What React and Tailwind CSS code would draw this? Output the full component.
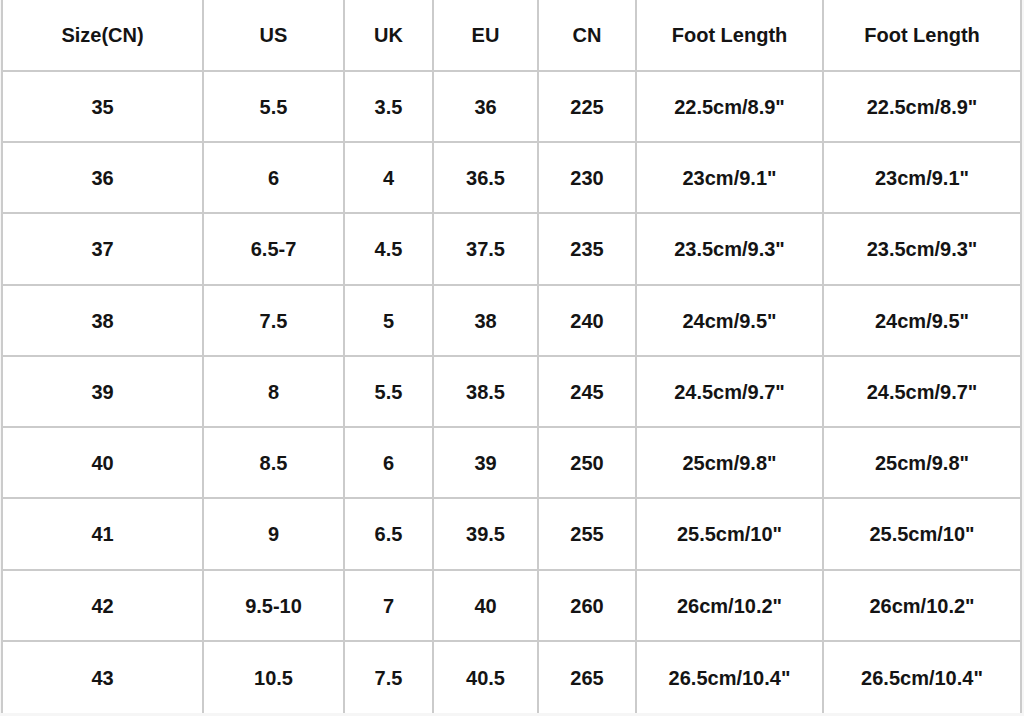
import React from "react";

// 列幅（罫線込み）と行の高さ
const colWidths = ["w-[203px]", "w-[141px]", "w-[89px]", "w-[105px]", "w-[98px]", "w-[187px]", "w-[198px]"];
const rowHeights = ["h-[72px]", "h-[71px]", "h-[71px]", "h-[72px]", "h-[71px]", "h-[71px]", "h-[71px]", "h-[72px]", "h-[71px]", "h-[71px]"];

const header = ["Size(CN)", "US", "UK", "EU", "CN", "Foot Length", "Foot Length"];

const rows = [
  ["35", "5.5", "3.5", "36", "225", "22.5cm/8.9\"", "22.5cm/8.9\""],
  ["36", "6", "4", "36.5", "230", "23cm/9.1\"", "23cm/9.1\""],
  ["37", "6.5-7", "4.5", "37.5", "235", "23.5cm/9.3\"", "23.5cm/9.3\""],
  ["38", "7.5", "5", "38", "240", "24cm/9.5\"", "24cm/9.5\""],
  ["39", "8", "5.5", "38.5", "245", "24.5cm/9.7\"", "24.5cm/9.7\""],
  ["40", "8.5", "6", "39", "250", "25cm/9.8\"", "25cm/9.8\""],
  ["41", "9", "6.5", "39.5", "255", "25.5cm/10\"", "25.5cm/10\""],
  ["42", "9.5-10", "7", "40", "260", "26cm/10.2\"", "26cm/10.2\""],
  ["43", "10.5", "7.5", "40.5", "265", "26.5cm/10.4\"", "26.5cm/10.4\""],
];

function App() {
  const all = [header, ...rows];
  return (
    <div
      className="w-[1024px] h-[716px] bg-[#f6f6f6] text-[#141414] text-[20px] font-bold overflow-hidden"
      style={{ fontFamily: '"Liberation Sans", Arial, sans-serif' }}
    >
      <div className="ml-[1px] bg-white w-[1021px] flex flex-col">
        {all.map((row, r) => (
          <div key={r} className={`flex ${rowHeights[r]}`}>
            {row.map((cell, c) => (
              <div
                key={c}
                className={`${colWidths[c]} h-full flex items-center justify-center border-r-2 border-[#cbcbcb] ${
                  c === 0 ? "border-l-2" : ""
                } ${r < all.length - 1 ? "border-b-2" : ""}`}
              >
                {cell}
              </div>
            ))}
          </div>
        ))}
      </div>
    </div>
  );
}

export default App;
